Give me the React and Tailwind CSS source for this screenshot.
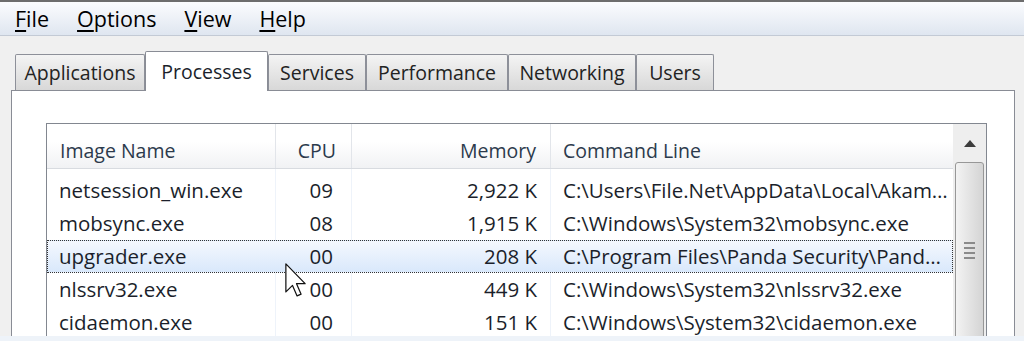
import React from "react";

const tabs = [
  { label: "Applications", w: "w-[130px]" },
  { label: "Processes", w: "w-[123px]", active: true },
  { label: "Services", w: "w-[98px]" },
  { label: "Performance", w: "w-[142px]" },
  { label: "Networking", w: "w-[128px]" },
  { label: "Users", w: "w-[78px]" },
];

const rows = [
  ["netsession_win.exe", "09", "2,922 K", "C:\\Users\\File.Net\\AppData\\Local\\Akam…"],
  ["mobsync.exe", "08", "1,915 K", "C:\\Windows\\System32\\mobsync.exe"],
  ["upgrader.exe", "00", "208 K", "C:\\Program Files\\Panda Security\\Pand…"],
  ["nlssrv32.exe", "00", "449 K", "C:\\Windows\\System32\\nlssrv32.exe"],
  ["cidaemon.exe", "00", "151 K", "C:\\Windows\\System32\\cidaemon.exe"],
];

const MenuItem = ({ first, rest }) => (
  <span>
    <span className="underline underline-offset-[3px]">{first}</span>
    {rest}
  </span>
);

const Cursor = () => (
  <svg
    className="absolute left-[285px] top-[263px] z-20"
    width="21"
    height="35"
    viewBox="0 0 12 20"
  >
    <path
      d="M0.5 0.5 L0.5 16.5 L4.3 12.8 L6.9 18.8 L9.2 17.8 L6.6 11.8 L11.5 11.8 Z"
      fill="white"
      stroke="#111"
      strokeWidth="0.7"
      strokeLinejoin="round"
    />
  </svg>
);

export default function App() {
  return (
    <div
      className="relative w-[1024px] h-[341px] overflow-hidden bg-[#f0f0f0] text-[#1b1f2b]"
      style={{ fontFamily: '"Open Sans", "Noto Sans", sans-serif' }}
    >
      {/* menu bar */}
      <div className="h-[36px] border-t-2 border-b border-t-[#6d6d6d] border-b-[#c3cad5] bg-gradient-to-b from-[#fbfcfe] to-[#dfe6f0] flex items-center gap-[28px] pl-[15px] text-[21.5px] text-black leading-none pt-[1px]">
        <MenuItem first="F" rest="ile" />
        <MenuItem first="O" rest="ptions" />
        <MenuItem first="V" rest="iew" />
        <MenuItem first="H" rest="elp" />
      </div>

      {/* tabs */}
      <div className="flex items-end h-[54px] pl-[15px] relative z-10">
        {tabs.map((t) =>
          t.active ? (
            <div
              key={t.label}
              className={`${t.w} h-[40px] -mb-px bg-white border border-b-0 border-[#898c95] rounded-t-[2px] flex items-start justify-center pt-[5px] text-[19.5px]`}
            >
              {t.label}
            </div>
          ) : (
            <div
              key={t.label}
              className={`${t.w} h-[36px] bg-gradient-to-b from-[#f4f4f4] to-[#d8d8d8] border border-b-0 border-[#8d9099] rounded-t-[2px] flex items-center justify-center text-[19.5px] text-[#222]`}
            >
              {t.label}
            </div>
          )
        )}
      </div>

      {/* panel */}
      <div className="ml-[11px] w-[1004px] h-[300px] bg-white border-t border-l border-r border-[#898c95] pt-[32px] pl-[34px]">
        <div className="w-[941px] h-[240px] border border-[#828790] flex">
          <div className="flex-1 flex flex-col">
            {/* header */}
            <div className="h-[45px] flex bg-gradient-to-b from-white from-40% to-[#f1f2f4] border-b border-[#d8dbe0] text-[19.5px] text-[#2c3a4c]">
              <div className="w-[229px] border-r border-[#e2e5ea] pl-[13px] pt-[12px]">Image Name</div>
              <div className="w-[76px] border-r border-[#e2e5ea] text-right pr-[15px] pt-[12px]">CPU</div>
              <div className="w-[199px] border-r border-[#e2e5ea] text-right pr-[14px] pt-[12px]">Memory</div>
              <div className="flex-1 pl-[12px] pt-[12px]">Command Line</div>
            </div>
            {/* rows */}
            <div className="relative flex-1 pt-[5px]">
              <div className="absolute inset-0 flex pointer-events-none">
                <div className="w-[229px] border-r border-[#eef3fa]" />
                <div className="w-[76px] border-r border-[#eef3fa]" />
                <div className="w-[199px] border-r border-[#eef3fa]" />
              </div>
              {rows.map((r, i) => (
                <div
                  key={r[0]}
                  className={`relative h-[33px] flex items-center text-[20.5px] whitespace-nowrap ${
                    i === 2
                      ? "bg-gradient-to-b from-[#f4f8fe] to-[#d9e8fb] border border-dotted border-[#333]"
                      : "border border-transparent"
                  }`}
                >
                  <div className="w-[229px] pl-[12px] -ml-px">{r[0]}</div>
                  <div className="w-[76px] text-right pr-[19px]">{r[1]}</div>
                  <div className="w-[199px] text-right pr-[14px]">{r[2]}</div>
                  <div className="flex-1 pl-[12px] overflow-hidden">{r[3]}</div>
                </div>
              ))}
            </div>
          </div>
          {/* scrollbar */}
          <div className="w-[33px] bg-[#eeeeee] flex flex-col items-center">
            <div className="h-[38px] w-full flex items-center justify-center">
              <svg width="12" height="7" viewBox="0 0 12 7">
                <path d="M0 7 L6 0 L12 7 Z" fill="#3c3c3c" />
              </svg>
            </div>
            <div className="w-[29px] flex-1 rounded-[3px] border border-[#979797] bg-gradient-to-r from-[#f3f3f3] to-[#d4d4d4] flex flex-col items-center pt-[79px] gap-[3px]">
              <div className="w-[11px] h-[2px] bg-[#8a8a8a]" />
              <div className="w-[11px] h-[2px] bg-[#8a8a8a]" />
              <div className="w-[11px] h-[2px] bg-[#8a8a8a]" />
              <div className="w-[11px] h-[2px] bg-[#8a8a8a]" />
            </div>
          </div>
        </div>
      </div>

      {/* bottom band */}
      <div className="absolute left-0 right-0 bottom-0 h-[5px] bg-[#eef3f9] z-30" />

      <Cursor />
    </div>
  );
}
